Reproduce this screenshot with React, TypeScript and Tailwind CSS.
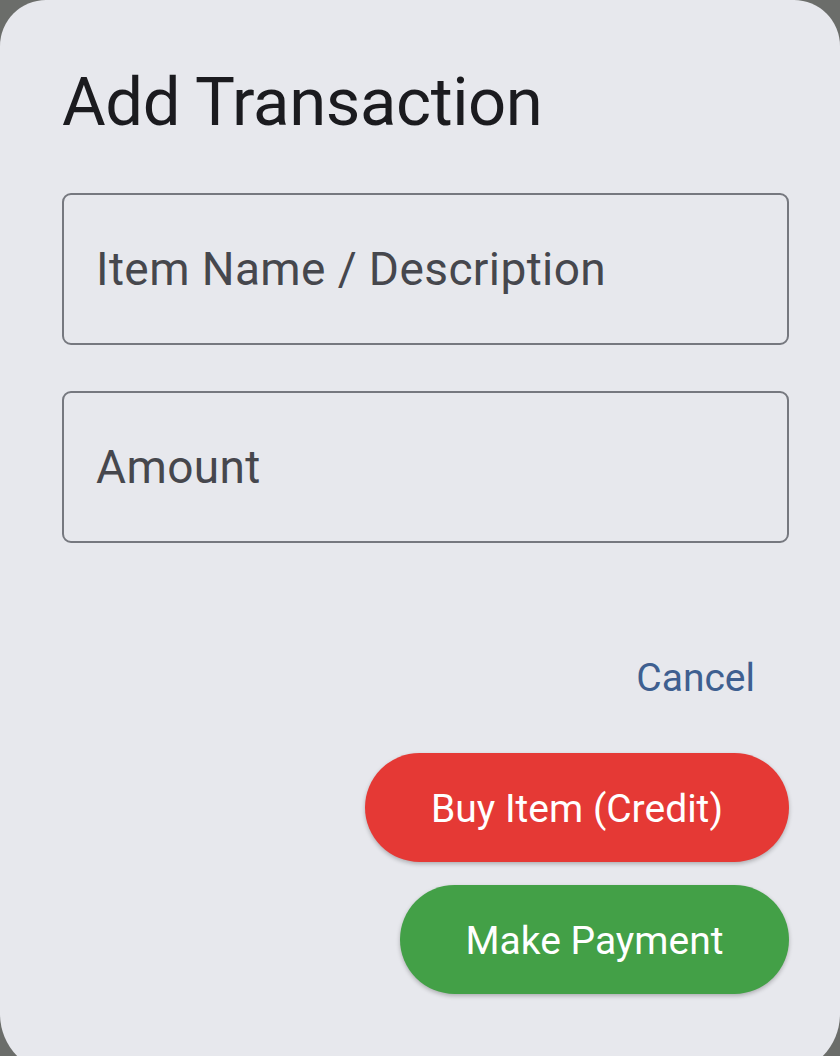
import React from "react";

export default function App() {
  return (
    <div className="h-[1056px] w-[840px] overflow-hidden bg-[#6b6d6a]" style={{ fontFamily: "Roboto, 'Noto Sans', sans-serif" }}>
      <div className="flex h-[1074px] w-[840px] flex-col rounded-t-[46px] rounded-b-[60px] bg-[#e7e8ed] pl-[62px] pr-[51px] pt-[62px]">
        <h1 className="text-[67px] leading-[80px] font-normal text-[#1b1b1f] tracking-[-0.4px]">Add Transaction</h1>
        <input
          className="mt-[51px] h-[152px] w-full rounded-[9px] border-2 border-[#76787f] bg-transparent px-[32px] text-[46px] tracking-[0.4px] text-[#1b1b1f] outline-none placeholder:text-[#46474d]"
          placeholder="Item Name / Description"
        />
        <input
          className="mt-[46px] h-[152px] w-full rounded-[9px] border-2 border-[#76787f] bg-transparent px-[32px] text-[46px] tracking-[0.4px] text-[#1b1b1f] outline-none placeholder:text-[#46474d]"
          placeholder="Amount"
        />
        <div className="mt-[111px] flex flex-col items-end">
          <button className="mr-[34px] text-[39px] leading-[48px] text-[#3e5f90]">Cancel</button>
          <button className="mt-[51px] flex h-[109px] w-[424px] items-center justify-center rounded-full bg-[#e53935] pt-[3px] text-[39px] text-white shadow-[0_2px_4px_rgba(0,0,0,0.25)]">
            Buy Item (Credit)
          </button>
          <button className="mt-[23px] flex h-[109px] w-[389px] items-center justify-center rounded-full bg-[#43a047] pt-[3px] text-[39px] text-white shadow-[0_2px_4px_rgba(0,0,0,0.25)]">
            Make Payment
          </button>
        </div>
      </div>
    </div>
  );
}
